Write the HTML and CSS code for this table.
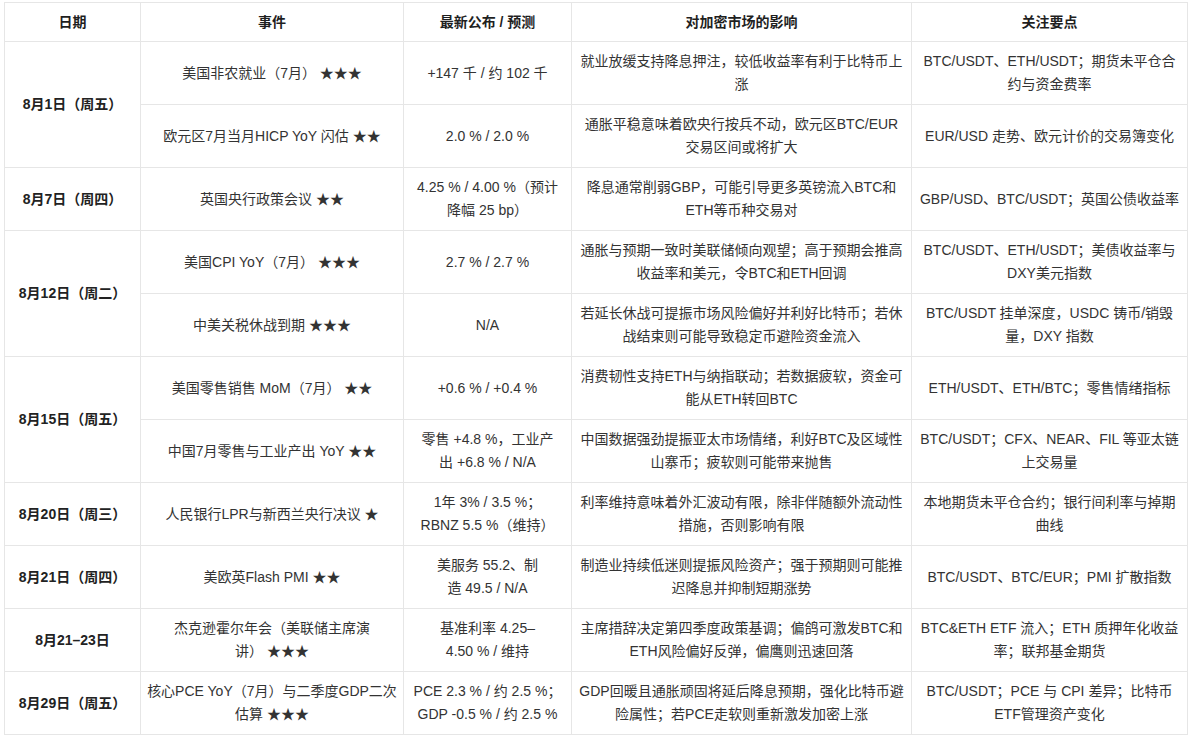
FILE: index.html
```html
<!DOCTYPE html>
<html lang="zh-CN">
<head>
<meta charset="utf-8">
<title>8月宏观事件日历</title>
<link rel="stylesheet" href="styles.css">
</head>
<body>
<div class="wrap">
<table class="cal">
  <colgroup>
    <col class="c-date"><col class="c-event"><col class="c-val"><col class="c-impact"><col class="c-focus">
  </colgroup>
  <thead>
    <tr><th>日期</th><th>事件</th><th>最新公布 / 预测</th><th>对加密市场的影响</th><th>关注要点</th></tr>
  </thead>
  <tbody>
    <tr>
      <td class="date" rowspan="2">8月1日（周五）</td>
      <td>美国非农就业（7月） ★★★</td>
      <td>+147 千 / 约 102 千</td>
      <td>就业放缓支持降息押注，较低收益率有利于比特币上涨</td>
      <td>BTC/USDT、ETH/USDT；期货未平仓合约与资金费率</td>
    </tr>
    <tr>
      <td>欧元区7月当月HICP YoY 闪估 ★★</td>
      <td>2.0 % / 2.0 %</td>
      <td>通胀平稳意味着欧央行按兵不动，欧元区BTC/EUR交易区间或将扩大</td>
      <td>EUR/USD 走势、欧元计价的交易簿变化</td>
    </tr>
    <tr>
      <td class="date">8月7日（周四）</td>
      <td>英国央行政策会议 ★★</td>
      <td>4.25 % / 4.00 %（预计<br>降幅 25 bp）</td>
      <td>降息通常削弱GBP，可能引导更多英镑流入BTC和ETH等币种交易对</td>
      <td>GBP/USD、BTC/USDT；英国公债收益率</td>
    </tr>
    <tr>
      <td class="date" rowspan="2">8月12日（周二）</td>
      <td>美国CPI YoY（7月） ★★★</td>
      <td>2.7 % / 2.7 %</td>
      <td>通胀与预期一致时美联储倾向观望；高于预期会推高收益率和美元，令BTC和ETH回调</td>
      <td>BTC/USDT、ETH/USDT；美债收益率与DXY美元指数</td>
    </tr>
    <tr>
      <td>中美关税休战到期 ★★★</td>
      <td>N/A</td>
      <td>若延长休战可提振市场风险偏好并利好比特币；若休战结束则可能导致稳定币避险资金流入</td>
      <td>BTC/USDT 挂单深度，USDC 铸币/销毁量，DXY 指数</td>
    </tr>
    <tr>
      <td class="date" rowspan="2">8月15日（周五）</td>
      <td>美国零售销售 MoM（7月） ★★</td>
      <td>+0.6 % / +0.4 %</td>
      <td>消费韧性支持ETH与纳指联动；若数据疲软，资金可能从ETH转回BTC</td>
      <td>ETH/USDT、ETH/BTC；零售情绪指标</td>
    </tr>
    <tr>
      <td>中国7月零售与工业产出 YoY ★★</td>
      <td>零售 +4.8 %，工业产<br>出 +6.8 % / N/A</td>
      <td>中国数据强劲提振亚太市场情绪，利好BTC及区域性山寨币；疲软则可能带来抛售</td>
      <td>BTC/USDT；CFX、NEAR、FIL 等亚太链上交易量</td>
    </tr>
    <tr>
      <td class="date">8月20日（周三）</td>
      <td>人民银行LPR与新西兰央行决议 ★</td>
      <td>1年 3% / 3.5 %；<br>RBNZ 5.5 %（维持）</td>
      <td>利率维持意味着外汇波动有限，除非伴随额外流动性措施，否则影响有限</td>
      <td>本地期货未平仓合约；银行间利率与掉期曲线</td>
    </tr>
    <tr>
      <td class="date">8月21日（周四）</td>
      <td>美欧英Flash PMI ★★</td>
      <td>美服务 55.2、制<br>造 49.5 / N/A</td>
      <td>制造业持续低迷则提振风险资产；强于预期则可能推迟降息并抑制短期涨势</td>
      <td>BTC/USDT、BTC/EUR；PMI 扩散指数</td>
    </tr>
    <tr>
      <td class="date">8月21–23日</td>
      <td>杰克逊霍尔年会（美联储主席演<br>讲） ★★★</td>
      <td>基准利率 4.25–<br>4.50 % / 维持</td>
      <td>主席措辞决定第四季度政策基调；偏鸽可激发BTC和ETH风险偏好反弹，偏鹰则迅速回落</td>
      <td>BTC&amp;ETH ETF 流入；ETH 质押年化收益率；联邦基金期货</td>
    </tr>
    <tr>
      <td class="date">8月29日（周五）</td>
      <td class="tight"><span class="line">核心PCE YoY（7月）与二季度GDP二次</span><br>估算 ★★★</td>
      <td>PCE 2.3 % / 约 2.5 %；<br>GDP -0.5 % / 约 2.5 %</td>
      <td>GDP回暖且通胀顽固将延后降息预期，强化比特币避险属性；若PCE走软则重新激发加密上涨</td>
      <td>BTC/USDT；PCE 与 CPI 差异；比特币ETF管理资产变化</td>
    </tr>
  </tbody>
</table>
</div>
</body>
</html>
```

FILE: styles.css
```css
html, body {
  margin: 0;
  padding: 0;
  background: #ffffff;
}
.wrap {
  padding: 2px 3px 0 4px;
}
.cal {
  width: 1183px;
  border-collapse: collapse;
  table-layout: fixed;
  font-family: "Liberation Sans", "Noto Sans CJK SC", sans-serif;
  font-size: 14px;
  line-height: 23px;
  color: #333333;
}
.c-date { width: 136px; }
.c-event { width: 263px; }
.c-val { width: 168px; }
.c-impact { width: 340px; }
.c-focus { width: 276px; }

.cal th,
.cal td {
  border: 1px solid #e6e6e6;
  text-align: center;
  vertical-align: middle;
  padding: 0 7px;
}
.cal th {
  height: 38px;
  font-weight: 600;
  color: #1f1f1f;
}
.cal tbody tr {
  height: 63px;
}
.cal td.date {
  font-weight: 700;
  color: #222222;
}
.cal td.tight {
  padding: 0 3px;
}
.cal .line {
  white-space: nowrap;
}
```
